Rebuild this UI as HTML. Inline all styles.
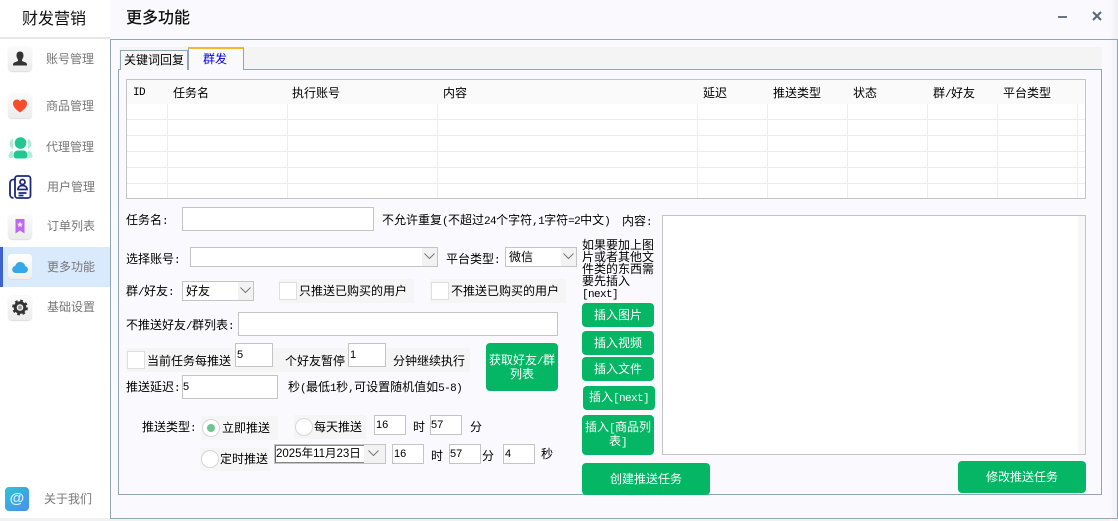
<!DOCTYPE html>
<html lang="zh"><head><meta charset="utf-8"><title>更多功能</title>
<style>
html,body{margin:0;padding:0;width:1118px;height:521px;overflow:hidden;background:#f9f9fe}
*{box-sizing:border-box}
body{position:relative;font-family:"Liberation Serif","WenQuanYi Zen Hei","Noto Sans CJK SC",sans-serif;font-size:12px;color:#000}
.a,.t,.i,.b,.g,.c,.r,.s{position:absolute}
.t{white-space:nowrap;line-height:14px;font-family:"WenQuanYi Zen Hei","Liberation Sans",sans-serif;font-size:12px}
.nav{position:absolute;white-space:nowrap;font-family:"Liberation Sans","Noto Sans CJK SC",sans-serif;font-size:12px;line-height:16px;color:#777}
.i{background:#fff;border:1px solid #c4c4c4;font-family:"Liberation Sans",sans-serif;font-size:11px;line-height:18px;padding:0 0 0 1px;color:#000}
.b{background:#05b764;color:#fff;border-radius:4px;text-align:center;font-family:"WenQuanYi Zen Hei","Liberation Sans",sans-serif;font-size:12px;line-height:12px;display:flex;align-items:center;justify-content:center}
.g{background:#f5f5f5}
.c{background:#fff;border:1px solid #dedede;width:18px;height:18px}
.r{background:#fff;border:1px solid #d6d6d6;border-radius:50%;width:18px;height:18px}
.s{background:#fff;border:1px solid #c4c4c4;font-family:"WenQuanYi Zen Hei",sans-serif;font-size:12px;line-height:19px;padding-left:3px}
.s i{position:absolute;right:0;top:0;bottom:0;width:15px;background:#f2f2f2}
.s svg{position:absolute;right:2px;top:5px}
.tile{position:absolute;width:24px;height:25px;border-radius:4px;background:linear-gradient(#fbfbfb,#ececec);box-shadow:0 1px 1px #ddd}
.col{position:absolute;top:104px;height:94px;width:1px;background:#ececec}
.row{position:absolute;left:127px;width:958px;height:1px;background:#ececec}
.h{position:absolute;top:86px;white-space:nowrap;line-height:14px;font-family:"WenQuanYi Zen Hei",sans-serif;font-size:12px}
.m{font-family:"Liberation Mono",monospace;font-size:11px;letter-spacing:-.6px}
</style></head><body>
<!-- sidebar -->
<div class="a" style="left:0;top:0;width:110px;height:518px;background:#fff"></div>
<div class="a" style="left:0;top:37px;width:110px;height:2px;background:#e6e6e6"></div>
<div class="a" style="left:0;top:518px;width:1118px;height:3px;background:#f1f1f4"></div>
<div class="a" style="left:1110px;top:0;width:8px;height:521px;background:linear-gradient(90deg,#f9f9fe,#f0f0f3)"></div>
<div class="nav" style="left:22px;top:10px;font-size:16px;line-height:20px;color:#111">财发营销</div>
<div class="nav" style="left:126px;top:9px;font-size:16px;line-height:20px;color:#111;font-weight:500">更多功能</div>
<div class="a" style="left:0;top:247px;width:110px;height:40px;background:#d9eafd"></div>
<div class="a" style="left:0;top:247px;width:3px;height:40px;background:#3f62d3"></div>

<div class="tile" style="left:8px;top:46px"></div>
<svg class="a" style="left:8px;top:46px" width="24" height="25" viewBox="0 0 24 25"><path d="M12 5.500c2.500 0 3.500 1.800 3.500 4 0 2-1 3.300-1.500 4.300v1.200c2 1 5 1.300 5 3.500v1H5v-1c0-2.200 3-2.500 5-3.500v-1.200c-.5-1-1.500-2.300-1.500-4.300 0-2.200 1-4 3.500-4z" fill="#333"/></svg>
<div class="nav" style="left:46px;top:51px">账号管理</div>

<div class="tile" style="left:8px;top:93px"></div>
<svg class="a" style="left:8px;top:93px" width="24" height="25" viewBox="0 0 24 25"><path d="M12 19.500C8 16.500 5 14 5 10.500 5 8 7 6.500 8.800 6.500c1.400 0 2.500.7 3.200 2 .7-1.300 1.800-2 3.200-2C17 6.500 19 8 19 10.500c0 3.500-3 6-7 9z" fill="#fa4b2d"/></svg>
<div class="nav" style="left:46px;top:98px">商品管理</div>

<svg class="a" style="left:8px;top:135px" width="25" height="24" viewBox="0 0 25 24"><path d="M5 3.500C2.500 5 1.500 7 1.500 9S3 13 5 14zM20 3.500c2.500 1.500 3.500 3.500 3.500 5.500S22 13 20 14z" fill="#b2ebd6"/><circle cx="12.500" cy="8" r="5.800" fill="#20c88f"/><path d="M0.500 21c0-3 2-5 4.500-5v7H3c-1.500 0-2.500-.5-2.500-2zM24.500 21c0-3-2-5-4.500-5v7h2c1.500 0 2.500-.5 2.500-2z" fill="#b2ebd6"/><path d="M5.500 20c0-2.500 2-4.500 4-4.500h6c2 0 4 2 4 4.500 0 2.500-1.500 3.500-3 3.500h-8c-1.500 0-3-1-3-3.500z" fill="#20c88f"/></svg>
<div class="nav" style="left:46px;top:139px">代理管理</div>

<svg class="a" style="left:9px;top:175px" width="23" height="24" viewBox="0 0 23 24" fill="none" stroke="#1c2a7d" stroke-width="1.800"><path d="M6 4.500H4.500C2.500 4.500 1 6 1 8v11.500C1 21.500 2.500 23 4.500 23"/><rect x="6" y="1" width="15.500" height="22" rx="2.500"/><circle cx="13.500" cy="7" r="2.500"/><path d="M9 14.500c0-2.500 2-4 4.500-4s4.500 1.500 4.500 4zM9.500 18h8M9.500 20.500h5"/></svg>
<div class="nav" style="left:47px;top:179px">用户管理</div>

<div class="tile" style="left:8px;top:214px"></div>
<svg class="a" style="left:8px;top:214px" width="24" height="25" viewBox="0 0 24 25"><path d="M7.500 5h9v14.500L12 16.500 7.500 19.500z" fill="#bb66f5"/><path d="M12 7.500l1 2 2 .2-1.500 1.400.4 2L12 12.100l-1.900 1 .4-2L9 9.700l2-.2z" fill="#fbe3ff"/></svg>
<div class="nav" style="left:47px;top:218px">订单列表</div>

<div class="tile" style="left:8px;top:254px;background:linear-gradient(#fff,#efefef)"></div>
<svg class="a" style="left:8px;top:254px" width="24" height="25" viewBox="0 0 24 25"><path d="M8 19c-2.500 0-3.800-1.700-3.800-3.500 0-2 1.500-3.300 3-3.500.6-2.500 2.600-4 5-4 2.700 0 4.700 1.800 5 4.200 1.500.2 2.700 1.500 2.700 3.200 0 2-1.500 3.600-3.500 3.600z" fill="#33a9e6"/></svg>
<div class="nav" style="left:47px;top:259px">更多功能</div>

<div class="tile" style="left:8px;top:295px"></div>
<svg class="a" style="left:8px;top:295px" width="24" height="25" viewBox="0 0 24 25"><circle cx="12" cy="12.500" r="4.800" fill="none" stroke="#333" stroke-width="3"/><circle cx="12" cy="12.500" r="6.800" fill="none" stroke="#333" stroke-width="2.200" stroke-dasharray="2.700 2.640"/><circle cx="12" cy="12.500" r="2" fill="#999"/></svg>
<div class="nav" style="left:47px;top:299px">基础设置</div>

<div class="a" style="left:5px;top:487px;width:24px;height:24px;border-radius:4px;background:linear-gradient(135deg,#2cc4d6,#4a8df0)"></div>
<div class="a" style="left:5px;top:487px;width:24px;height:24px;text-align:center;color:#d8f2fb;font:bold 15px/23px 'Liberation Sans',sans-serif">@</div>
<div class="nav" style="left:44px;top:491px">关于我们</div>

<!-- window controls -->
<div class="a" style="left:1058px;top:16px;width:9px;height:2px;background:#6b7580"></div>
<svg class="a" style="left:1091px;top:10px" width="12" height="12" viewBox="0 0 12 12"><path d="M2 2l8 8M10 2l-8 8" stroke="#56687a" stroke-width="2"/></svg>

<!-- outer frame -->
<div class="a" style="left:110px;top:39px;width:1008px;height:480px;border:1px solid #90a6b4"></div>
<div class="a" style="left:119px;top:47px;width:983px;height:22px;background:#f4f4f4"></div>
<div class="a" style="left:118px;top:69px;width:984px;height:426px;border:1px solid #90a6b4"></div>
<!-- tabs -->
<div class="a" style="left:120px;top:50px;width:68px;height:20px;background:#f6f6f6;border:1px solid #90a6b4;border-bottom:none"></div>
<div class="t" style="left:124px;top:53px">关键词回复</div>
<div class="a" style="left:188px;top:47px;width:56px;height:23px;background:#f9f9fe;border:1px solid #90a6b4;border-top:2px solid #fbb62b;border-bottom:none"></div>
<div class="t" style="left:203px;top:52px;color:#0000ee">群发</div>

<!-- table -->
<div class="a" style="left:126px;top:79px;width:960px;height:120px;background:#fff;border:1px solid #c4c4c4"></div>
<div class="a" style="left:127px;top:80px;width:958px;height:24px;background:#fafafa"></div>
<div class="row" style="top:119px"></div><div class="row" style="top:135px"></div><div class="row" style="top:151px"></div><div class="row" style="top:167px"></div><div class="row" style="top:183px"></div>
<div class="col" style="left:167px"></div><div class="col" style="left:287px"></div><div class="col" style="left:437px"></div><div class="col" style="left:697px"></div><div class="col" style="left:767px"></div><div class="col" style="left:847px"></div><div class="col" style="left:927px"></div><div class="col" style="left:997px"></div><div class="col" style="left:1077px"></div>
<div class="h m" style="left:133px">ID</div>
<div class="h" style="left:173px">任务名</div><div class="h" style="left:292px">执行账号</div><div class="h" style="left:443px">内容</div><div class="h" style="left:703px">延迟</div><div class="h" style="left:773px">推送类型</div><div class="h" style="left:853px">状态</div><div class="h" style="left:933px">群<span class="m">/</span>好友</div><div class="h" style="left:1003px">平台类型</div>

<!-- form -->
<div class="t" style="left:126px;top:213px">任务名<span class="m">:</span></div>
<div class="i" style="left:182px;top:207px;width:192px;height:24px"></div>
<div class="t" style="left:382px;top:213px">不允许重复<span class="m">(</span>不超过<span class="m">24</span>个字符<span class="m">,1</span>字符<span class="m">=2</span>中文<span class="m">)</span></div>
<div class="t" style="left:622px;top:214px">内容<span class="m">: </span></div>

<div class="t" style="left:126px;top:252px">选择账号<span class="m">:</span></div>
<div class="s" style="left:190px;top:247px;width:248px;height:20px"><i></i><svg width="11" height="7" viewBox="0 0 11 7"><path d="M.5 .5l5 5 5-5" fill="none" stroke="#777"/></svg></div>
<div class="t" style="left:446px;top:252px">平台类型<span class="m">:</span></div>
<div class="s" style="left:505px;top:247px;width:72px;height:20px">微信<i></i><svg width="11" height="7" viewBox="0 0 11 7"><path d="M.5 .5l5 5 5-5" fill="none" stroke="#777"/></svg></div>

<div class="t" style="left:126px;top:284px">群<span class="m">/</span>好友<span class="m">:</span></div>
<div class="s" style="left:182px;top:281px;width:72px;height:20px">好友<i></i><svg width="11" height="7" viewBox="0 0 11 7"><path d="M.5 .5l5 5 5-5" fill="none" stroke="#777"/></svg></div>
<div class="g" style="left:279px;top:279px;width:135px;height:24px"></div><div class="c" style="left:279px;top:282px"></div>
<div class="t" style="left:299px;top:284px">只推送已购买的用户</div>
<div class="g" style="left:430px;top:279px;width:136px;height:24px"></div><div class="c" style="left:431px;top:282px"></div>
<div class="t" style="left:451px;top:284px">不推送已购买的用户</div>

<div class="t" style="left:126px;top:318px">不推送好友<span class="m">/</span>群列表<span class="m">:</span></div>
<div class="i" style="left:238px;top:312px;width:320px;height:24px"></div>

<div class="g" style="left:126px;top:348px;width:344px;height:24px"></div><div class="c" style="left:127px;top:351px"></div>
<div class="t" style="left:147px;top:354px">当前任务每推送</div>
<div class="i" style="left:235px;top:343px;width:38px;height:24px;line-height:22px">5</div>
<div class="t" style="left:285px;top:354px">个好友暂停</div>
<div class="i" style="left:348px;top:343px;width:38px;height:24px;line-height:22px">1</div>
<div class="t" style="left:393px;top:354px">分钟继续执行</div>
<div class="b" style="left:486px;top:343px;width:72px;height:48px"><span>获取好友<span class="m">/</span>群<br>列表</span></div>

<div class="t" style="left:126px;top:380px">推送延迟<span class="m">:</span></div>
<div class="i" style="left:182px;top:375px;width:96px;height:24px;line-height:22px;padding-left:0">5</div>
<div class="t" style="left:288px;top:380px">秒<span class="m">(</span>最低<span class="m">1</span>秒<span class="m">,</span>可设置随机值如<span class="m">5-8)</span></div>

<div class="t" style="left:142px;top:420px">推送类型<span class="m">:</span></div>
<div class="g" style="left:201px;top:416px;width:77px;height:24px"></div>
<div class="r" style="left:202px;top:419px"></div><div class="a" style="left:207px;top:424px;width:8px;height:8px;border-radius:50%;background:#6fc591"></div>
<div class="t" style="left:222px;top:421px">立即推送</div>
<div class="g" style="left:294px;top:415px;width:72px;height:24px"></div><div class="r" style="left:295px;top:418px"></div>
<div class="t" style="left:314px;top:420px">每天推送</div>
<div class="i" style="left:374px;top:415px;width:32px;height:20px">16</div>
<div class="t" style="left:413px;top:420px">时</div>
<div class="i" style="left:430px;top:415px;width:32px;height:20px;padding-left:0">57</div>
<div class="t" style="left:470px;top:420px">分</div>

<div class="g" style="left:200px;top:448px;width:70px;height:23px"></div><div class="r" style="left:201px;top:450px"></div>
<div class="t" style="left:220px;top:452px">定时推送</div>
<div class="a" style="left:274px;top:444px;width:112px;height:20px;background:#f2f2f2;border:1px solid #c4c4c4;overflow:hidden"><div class="a" style="left:0;top:0;width:89px;height:18px;background:#fff;border-left:1px solid #666;border-top:1px solid #888;border-bottom:1px solid #888"></div><div class="a" style="left:1px;top:1px;font:11.500px/17px 'Liberation Sans','WenQuanYi Zen Hei',sans-serif;white-space:nowrap">2025年11月23日</div><svg class="a" style="right:6px;top:5px" width="11" height="7" viewBox="0 0 11 7"><path d="M.5 .5l5 5 5-5" fill="none" stroke="#777"/></svg></div>
<div class="i" style="left:392px;top:444px;width:32px;height:20px">16</div>
<div class="t" style="left:431px;top:449px">时</div>
<div class="i" style="left:449px;top:444px;width:32px;height:20px;padding-left:0">57</div>
<div class="t" style="left:482px;top:449px">分</div>
<div class="i" style="left:503px;top:444px;width:32px;height:20px">4</div>
<div class="t" style="left:541px;top:447px">秒</div>

<!-- note & buttons -->
<div class="t" style="left:582px;top:239px;width:72px;white-space:normal;line-height:12px">如果要加上图片或者其他文件类的东西需要先插入<span class="m">[next]</span></div>
<div class="b" style="left:582px;top:303px;width:72px;height:24px">插入图片</div>
<div class="b" style="left:582px;top:331px;width:72px;height:24px">插入视频</div>
<div class="b" style="left:582px;top:357px;width:72px;height:24px">插入文件</div>
<div class="b" style="left:583px;top:386px;width:72px;height:24px"><span>插入<span class="m">[next]</span></span></div>
<div class="b" style="left:582px;top:415px;width:72px;height:40px"><span>插入<span class="m">[</span>商品列<br>表<span class="m">]</span></span></div>
<div class="b" style="left:582px;top:463px;width:128px;height:32px">创建推送任务</div>
<div class="b" style="left:958px;top:461px;width:128px;height:32px">修改推送任务</div>

<!-- textarea -->
<div class="a" style="left:662px;top:215px;width:424px;height:240px;background:#fff;border:1px solid #c4c4c4"></div>
<div class="a" style="left:1078px;top:216px;width:7px;height:238px;background:#f7f7f7"></div>
</body></html>
